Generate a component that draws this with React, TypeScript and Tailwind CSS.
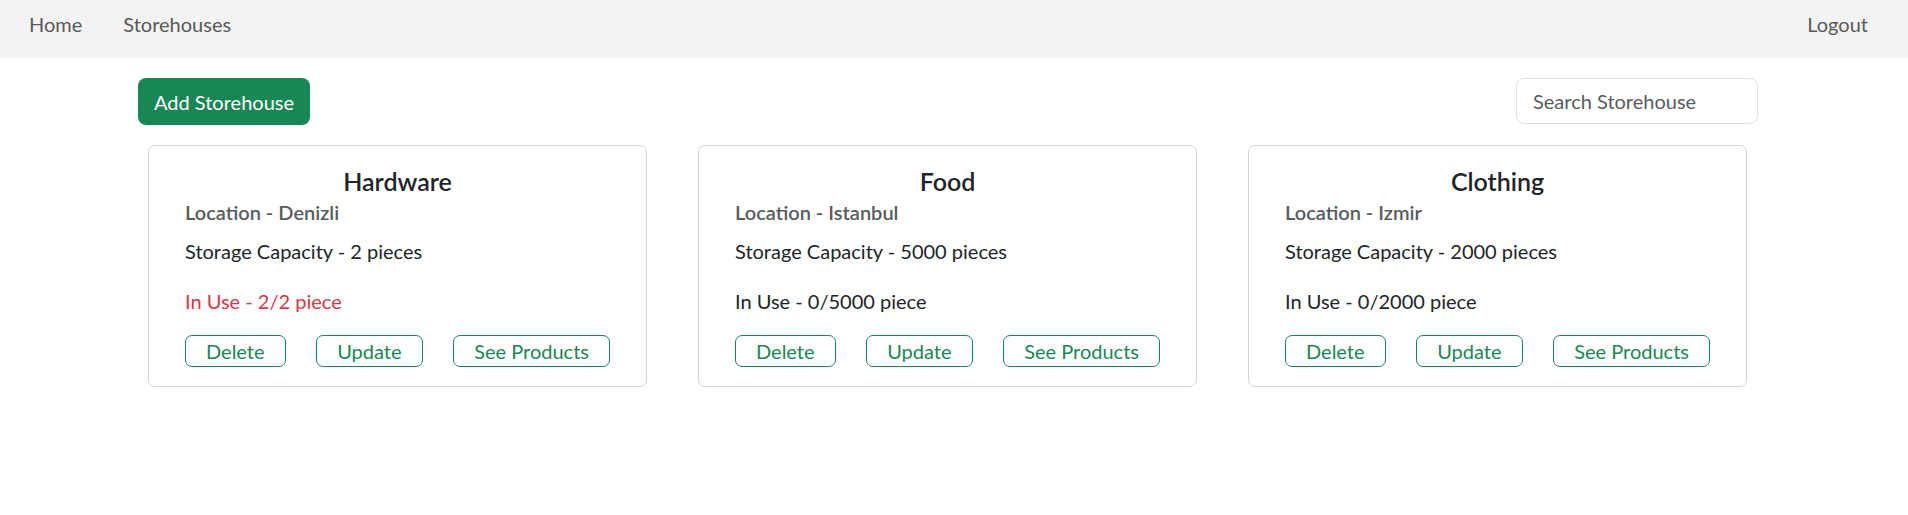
import React from "react";

const FONT = 'Lato, "Noto Sans", sans-serif';

type Store = { name: string; location: string; cap: number; used: number };
const stores: Store[] = [
  { name: "Hardware", location: "Denizli", cap: 2, used: 2 },
  { name: "Food", location: "Istanbul", cap: 5000, used: 0 },
  { name: "Clothing", location: "Izmir", cap: 2000, used: 0 },
];

function Card({ s }: { s: Store }) {
  const full = s.used >= s.cap;
  return (
    <div className="w-[499px] border border-[#d6d6d6] rounded-[7px] px-[36px] pt-[21px] pb-[19px]">
      <h5 className="text-center text-[25px] leading-[29px] font-semibold text-[#212529]">{s.name}</h5>
      <div className="mt-[1px] text-[20px] leading-[30px] font-semibold text-[#595c5f]">Location - {s.location}</div>
      <p className="mt-[9px] text-[20px] leading-[30px] text-[#212529]">Storage Capacity - {s.cap} pieces</p>
      <p className={"mt-[20px] text-[20px] leading-[30px] " + (full ? "text-[#dc3545]" : "text-[#212529]")}>
        In Use - {s.used}/{s.cap} piece
      </p>
      <div className="mt-[19px] flex justify-between">
        <button className="border border-[#198754] text-[#198754] rounded-[7px] px-[20px] text-[20px] leading-[30px]">Delete</button>
        <button className="border border-[#198754] text-[#198754] rounded-[7px] px-[20px] text-[20px] leading-[30px]">Update</button>
        <button className="border border-[#198754] text-[#198754] rounded-[7px] px-[20px] text-[20px] leading-[30px]">See Products</button>
      </div>
    </div>
  );
}

export default function App() {
  return (
    <div className="relative min-h-[515px] bg-white" style={{ fontFamily: FONT }}>
      <nav className="h-[58px] bg-[#f3f3f3] flex items-start justify-between pt-[9px] pl-[29px] pr-[40px] text-[20px] leading-[30px] text-[#595959]">
        <div className="flex gap-[41px]">
          <a>Home</a>
          <a>Storehouses</a>
        </div>
        <a>Logout</a>
      </nav>
      <div className="mt-[20px] flex justify-between items-start pl-[138px] pr-[150px]">
        <button className="h-[47px] px-[16px] rounded-[8px] bg-[#198754] text-white text-[20px] leading-[30px]">Add Storehouse</button>
        <input
          placeholder="Search Storehouse"
          className="w-[242px] h-[46px] border border-[#dee2e6] rounded-[8px] px-[16px] text-[20px] placeholder:text-[#595c5f] outline-none"
        />
      </div>
      <div className="mt-[20px] flex gap-[51px] pl-[148px]">
        {stores.map((s) => (
          <Card key={s.name} s={s} />
        ))}
      </div>
    </div>
  );
}
